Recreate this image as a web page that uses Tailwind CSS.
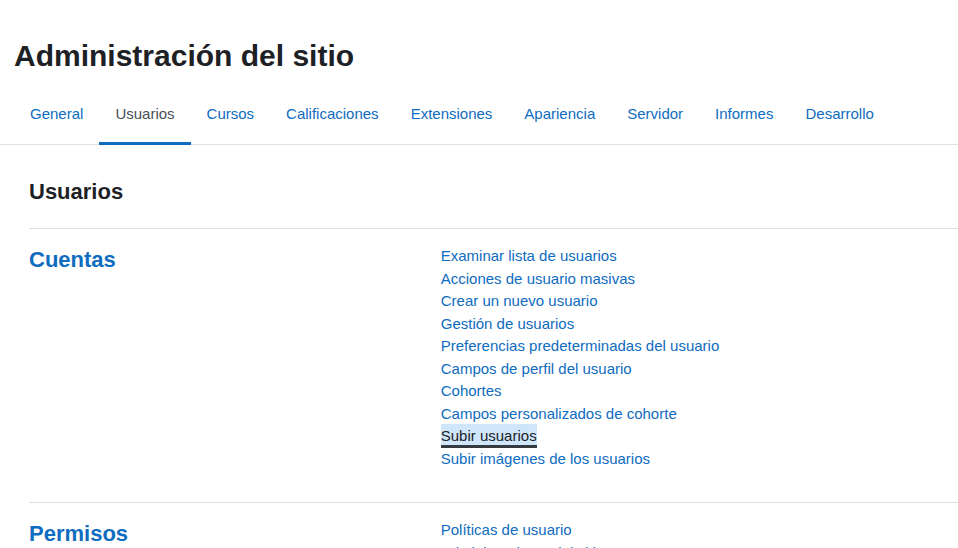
<!DOCTYPE html>
<html lang="es">
<head>
<meta charset="utf-8">
<meta name="viewport" content="width=device-width, initial-scale=1">
<title>Administración del sitio</title>
<script src="https://cdn.jsdelivr.net/npm/@tailwindcss/browser@4"></script>
</head>
<body class="bg-white font-['Liberation_Sans',Arial,sans-serif] text-[15px] leading-normal text-[#1d2125]">
<header class="px-[14px] pt-[38px]">
  <h1 class="text-[30px] leading-[36px] font-bold">Administración del sitio</h1>
</header>
<nav aria-label="Secciones" class="mt-[10px] border-b border-[#dee2e6] px-[14px] leading-[23px]">
  <ul class="-mb-px flex text-[#0f6cbf]">
    <li><a href="#general" class="block border-b-3 border-transparent px-4 pt-[18px] pb-[17px]">General</a></li>
    <li><a href="#usuarios" aria-current="page" class="block border-b-3 border-[#0f6cbf] px-4 pt-[18px] pb-[17px] text-[#495057]">Usuarios</a></li>
    <li><a href="#cursos" class="block border-b-3 border-transparent px-4 pt-[18px] pb-[17px]">Cursos</a></li>
    <li><a href="#calificaciones" class="block border-b-3 border-transparent px-4 pt-[18px] pb-[17px]">Calificaciones</a></li>
    <li><a href="#extensiones" class="block border-b-3 border-transparent px-4 pt-[18px] pb-[17px]">Extensiones</a></li>
    <li><a href="#apariencia" class="block border-b-3 border-transparent px-4 pt-[18px] pb-[17px]">Apariencia</a></li>
    <li><a href="#servidor" class="block border-b-3 border-transparent px-4 pt-[18px] pb-[17px]">Servidor</a></li>
    <li><a href="#informes" class="block border-b-3 border-transparent px-4 pt-[18px] pb-[17px]">Informes</a></li>
    <li><a href="#desarrollo" class="block border-b-3 border-transparent px-4 pt-[18px] pb-[17px]">Desarrollo</a></li>
  </ul>
</nav>
<main class="pt-8 pl-[29px]">
  <h2 class="mb-[22px] text-[22px] leading-[29px] font-bold">Usuarios</h2>
  <section class="grid grid-cols-[44%_1fr] gap-x-[3px] border-t border-[#dfdfdf] pt-4 pb-8 text-[#0f6cbf]">
    <h3 class="text-[22px] leading-[29px] font-bold"><a href="#cuentas">Cuentas</a></h3>
    <ul>
      <li><a href="#lista">Examinar lista de usuarios</a></li>
      <li><a href="#masivas">Acciones de usuario masivas</a></li>
      <li><a href="#nuevo">Crear un nuevo usuario</a></li>
      <li><a href="#gestion">Gestión de usuarios</a></li>
      <li><a href="#preferencias">Preferencias predeterminadas del usuario</a></li>
      <li><a href="#campos">Campos de perfil del usuario</a></li>
      <li><a href="#cohortes">Cohortes</a></li>
      <li><a href="#campos-cohorte">Campos personalizados de cohorte</a></li>
      <li><a href="#subir" class="bg-[#cfe6fa] pb-px text-[#1d2125] shadow-[0_-3px_#cfe6fa,0_3px_#343a40]">Subir usuarios</a></li>
      <li><a href="#imagenes">Subir imágenes de los usuarios</a></li>
    </ul>
  </section>
  <section class="grid grid-cols-[44%_1fr] gap-x-[3px] border-t border-[#dfdfdf] pt-4 pb-8 text-[#0f6cbf]">
    <h3 class="text-[22px] leading-[29px] font-bold"><a href="#permisos">Permisos</a></h3>
    <ul>
      <li><a href="#politicas">Políticas de usuario</a></li>
      <li><a href="#administradores">Administradores del sitio</a></li>
    </ul>
  </section>
</main>
</body>
</html>
